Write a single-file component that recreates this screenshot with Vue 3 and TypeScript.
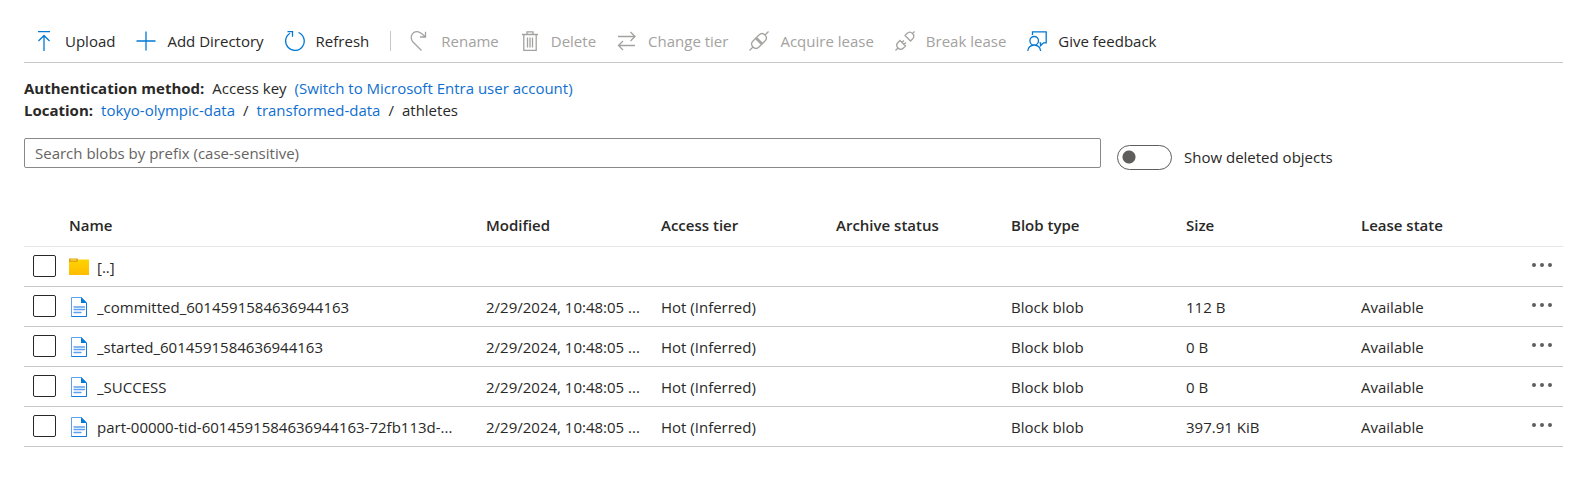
<script setup lang="ts">
import { ref } from 'vue'

interface Command {
  id: string
  label: string
  disabled?: boolean
}

interface Blob {
  name: string
  folder?: boolean
  modified?: string
  tier?: string
  type?: string
  size?: string
  lease?: string
}

const primary: Command[] = [
  { id: 'upload', label: 'Upload' },
  { id: 'add', label: 'Add Directory' },
  { id: 'refresh', label: 'Refresh' },
]

const secondary: Command[] = [
  { id: 'rename', label: 'Rename', disabled: true },
  { id: 'delete', label: 'Delete', disabled: true },
  { id: 'tier', label: 'Change tier', disabled: true },
  { id: 'acquire', label: 'Acquire lease', disabled: true },
  { id: 'break', label: 'Break lease', disabled: true },
  { id: 'feedback', label: 'Give feedback' },
]

const groups = [primary, secondary]

const icons: Record<string, string> = {
  upload: 'M4 .7h12M10 20V4.500M4.500 10 10 4.500l5.500 5.500',
  add: 'M10 .5v19M.5 10h19',
  refresh: 'M13.500 1.500A9.300 9.300 0 1 1 5 2.200M2.500 .7h5v5',
  rename: 'M11.500 19.500 3 11C-.8 6.500 2 .7 7 .7c3 0 4.500 1.800 8.500 5.300M15.500 .7V6h-5.500',
  delete: 'M2 3.500h16M7 3.500V.8h6v2.700M3.800 3.500v16h12.400v-16M7.500 6.500v10M10 6.500v10M12.500 6.500v10',
  tier: 'M1 5.500h17M13.500 1l4.500 4.500L13.500 10M18 14.500H1.500M6 10l-4.500 4.500L6 19',
  acquire:
    'M.5 19.500 4 16M16 4 19.500.5M4 16c-2-2-2-4 0-6l2.500-2.500 6 6L10 16c-2 2-4 2-6 0ZM7.500 6.500 10 4c2-2 4-2 6 0s2 4 0 6l-2.500 2.500ZM6.500 7.500l1-1M12.500 13.500l1-1',
  break:
    'M.5 19.500 3 17M17.500 2.500l2-2M3 17c-2-2-1.500-4 0-5.500L5 9.500l5.500 5.500-2 2c-1.500 1.500-3.500 2-5.500 0ZM10 4.500l2-2c1.500-1.500 3.500-2 5.500 0 2 2 1.500 4 0 5.500l-2 2ZM7 11.500l2-2M9 13.500l2-2',
  feedback:
    'M5.500 4V.8h13.700v11h-2.700l-3 3v-3h-1M7.200 5.500a4.300 4.300 0 1 1 0 8.600 4.300 4.300 0 0 1 0-8.600M.8 20c0-3.500 2.800-6 6.400-6s6.400 2.500 6.400 6',
}

const columns = ['Modified', 'Access tier', 'Archive status', 'Blob type', 'Size', 'Lease state']

const file = (name: string, size: string): Blob => ({
  name,
  size,
  modified: '2/29/2024, 10:48:05 ...',
  tier: 'Hot (Inferred)',
  type: 'Block blob',
  lease: 'Available',
})

const blobs: Blob[] = [
  { name: '[..]', folder: true },
  file('_committed_6014591584636944163', '112 B'),
  file('_started_6014591584636944163', '0 B'),
  file('_SUCCESS', '0 B'),
  file('part-00000-tid-6014591584636944163-72fb113d-...', '397.91 KiB'),
]

const prefix = ref('')
const showDeleted = ref(false)
const selected = ref<string[]>([])
</script>

<template>
  <main class="page">
    <div class="toolbar" role="toolbar" aria-label="Container commands">
      <div v-for="(group, g) in groups" :key="g" class="group">
        <button v-for="c in group" :key="c.id" type="button" class="command" :disabled="c.disabled">
          <svg class="command-icon" viewBox="0 0 20 20" aria-hidden="true"><path :d="icons[c.id]" /></svg>
          <span>{{ c.label }}</span>
        </button>
      </div>
    </div>

    <section class="info">
      <div class="line">
        <b>Authentication method:</b>
        <span>Access key</span>
        <a href="#">(Switch to Microsoft Entra user account)</a>
      </div>
      <nav class="line" aria-label="Location">
        <b>Location:</b>
        <a href="#">tokyo-olympic-data</a><span>/</span>
        <a href="#">transformed-data</a><span>/</span>
        <span>athletes</span>
      </nav>
    </section>

    <div class="filters">
      <input v-model="prefix" class="search" type="text" aria-label="Search blobs by prefix" placeholder="Search blobs by prefix (case-sensitive)" />
      <label class="toggle">
        <input v-model="showDeleted" class="switch" type="checkbox" role="switch" />
        <span>Show deleted objects</span>
      </label>
    </div>

    <table class="blobs">
      <colgroup>
        <col class="col-check" />
        <col />
        <col v-for="c in columns" :key="c" class="col-data" />
        <col class="col-more" />
      </colgroup>
      <thead>
        <tr>
          <td></td>
          <th scope="col">Name</th>
          <th v-for="c in columns" :key="c" scope="col">{{ c }}</th>
          <td></td>
        </tr>
      </thead>
      <tbody>
        <tr v-for="b in blobs" :key="b.name">
          <td class="check-cell">
            <input v-model="selected" class="check" type="checkbox" :value="b.name" :aria-label="`Select ${b.name}`" />
          </td>
          <td>
            <div class="name">
              <svg v-if="b.folder" class="file-icon" viewBox="0 0 20 20" aria-hidden="true">
                <defs>
                  <linearGradient id="folder-fill" x1="0" y1="0" x2="0" y2="1">
                    <stop offset="0" stop-color="#ffd400" />
                    <stop offset="1" stop-color="#ffbd00" />
                  </linearGradient>
                </defs>
                <path d="M0 1.500h8.500l1 1.500H20V6H0z" fill="#dfa500" />
                <path d="M0 5h8l2-2.500h10v15.500H0z" fill="url(#folder-fill)" />
                <path d="M1.500 3h6" stroke="#ffe08a" />
              </svg>
              <svg v-else class="file-icon" viewBox="0 0 20 20" aria-hidden="true">
                <path d="M2.500 .5h9.700l5.300 5.300v13.700h-15z" fill="#fff" stroke="#5ea0ef" />
                <path d="M17.500 6v13.500h-15" fill="none" stroke="#0f7bdc" />
                <path d="M12 0l6 6h-6z" fill="#0078d4" />
                <path d="M5 10h10.500M5 12.500h10.500M5 15.500h7" stroke="#5ea0ef" stroke-width="1.300" stroke-linecap="round" />
              </svg>
              <span class="clip">{{ b.name }}</span>
            </div>
          </td>
          <td>{{ b.modified }}</td>
          <td>{{ b.tier }}</td>
          <td></td>
          <td>{{ b.type }}</td>
          <td>{{ b.size }}</td>
          <td>{{ b.lease }}</td>
          <td class="more-cell">
            <button type="button" class="more" :aria-label="`More actions for ${b.name}`">
              <svg viewBox="0 0 20 4" aria-hidden="true">
                <circle cx="2" cy="2" r="2" />
                <circle cx="10" cy="2" r="2" />
                <circle cx="18" cy="2" r="2" />
              </svg>
            </button>
          </td>
        </tr>
      </tbody>
    </table>
  </main>
</template>

<style>
body {
  margin: 0;
  background: #fff;
}
</style>

<style scoped>
.page {
  padding: 20px 24px;
  color: #292827;
  font: 15px/22px "Segoe UI", "Open Sans", "Noto Sans", sans-serif;
}

button,
input {
  margin: 0;
  font: inherit;
  color: inherit;
}

a {
  color: #0f6fd0;
  text-decoration: none;
}

.toolbar {
  display: flex;
  height: 42px;
  border-bottom: 1px solid #c8c8c8;
}

.group {
  display: flex;
  align-items: center;
  gap: 21px;
  padding-left: 10px;
}

.group + .group {
  margin-left: 21px;
  padding-left: 20px;
  background: linear-gradient(#c8c8c8, #c8c8c8) left center / 1px 20px no-repeat;
}

.command {
  display: flex;
  align-items: center;
  gap: 11px;
  padding: 0;
  border: 0;
  background: none;
  white-space: nowrap;
}

.command:disabled {
  color: #a3a2a0;
}

.command-icon {
  width: 20px;
  height: 20px;
  fill: none;
  stroke: #0078d4;
  stroke-width: 1.300;
}

.command:disabled .command-icon {
  stroke: #a3a2a0;
}

.info {
  margin-top: 14px;
}

.line {
  display: flex;
  gap: 8px;
}

.filters {
  display: flex;
  gap: 16px;
  margin-top: 17px;
}

.search {
  box-sizing: border-box;
  flex: 0 1 1077px;
  min-width: 0;
  height: 30px;
  padding: 0 10px;
  border: 1px solid #8a8886;
  border-radius: 2px;
}

.search::placeholder {
  color: #666462;
  opacity: 1;
}

.toggle {
  display: flex;
  align-items: center;
  gap: 12px;
  height: 38px;
  white-space: nowrap;
}

.switch {
  box-sizing: border-box;
  width: 55px;
  height: 25px;
  appearance: none;
  border: 1px solid #605e5c;
  border-radius: 13px;
  background: radial-gradient(circle at 11px 11px, #605e5c 6px, transparent 7px);
}

.switch:checked {
  background: radial-gradient(circle at 42px 11px, #0078d4 6px, transparent 7px);
}

.blobs {
  width: 100%;
  margin-top: 28px;
  table-layout: fixed;
  border-collapse: separate;
  border-spacing: 0;
}

.col-check {
  width: 37px;
}

.col-data {
  width: 175px;
}

.col-more {
  width: 35px;
}

th,
td {
  box-sizing: border-box;
  height: 40px;
  padding: 0 8px;
  overflow: hidden;
  border-bottom: 1px solid #c8c8c8;
  text-align: left;
  text-overflow: ellipsis;
  white-space: nowrap;
}

thead th,
thead td {
  height: 43px;
  border-bottom-color: #e6e6e6;
  font-weight: 600;
}

.name {
  display: flex;
  align-items: center;
  gap: 8px;
}

.clip {
  overflow: hidden;
  text-overflow: ellipsis;
}

.file-icon {
  flex: none;
  width: 20px;
  height: 20px;
}

.check-cell {
  padding: 0 0 2px 9px;
}

.check {
  display: block;
  box-sizing: border-box;
  width: 23px;
  height: 22px;
  appearance: none;
  border: 1px solid #292827;
  border-radius: 2px;
}

.check:checked {
  background: #0078d4;
}

.more-cell {
  padding: 0 0 4px;
}

.more {
  display: block;
  width: 28px;
  height: 28px;
  padding: 0 4px;
  border: 0;
  background: none;
}

.more svg {
  display: block;
  width: 20px;
  height: 4px;
  fill: #605e5c;
}
</style>
